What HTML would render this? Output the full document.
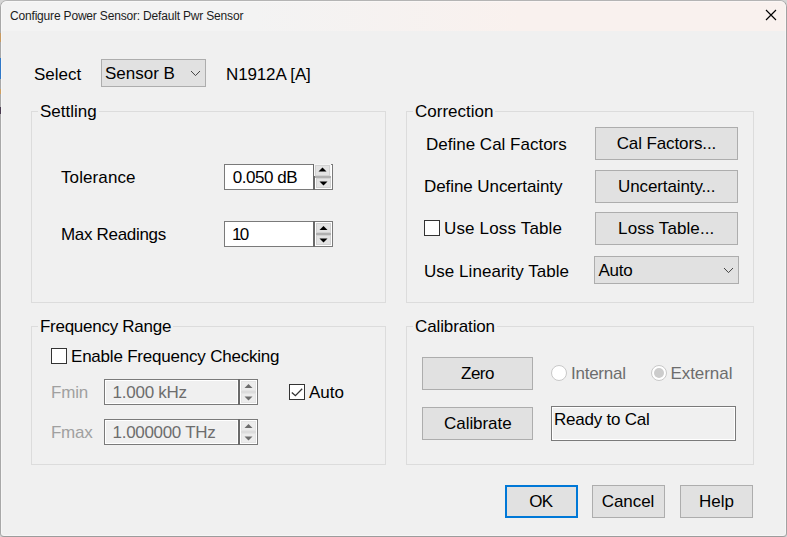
<!DOCTYPE html>
<html><head><meta charset="utf-8">
<style>
html,body{margin:0;padding:0;}
body{width:787px;height:537px;overflow:hidden;background:#d6d6d6;position:relative;font-family:"Liberation Sans",sans-serif;font-size:17px;color:#000;}
.abs{position:absolute;}
#win{position:absolute;left:0;top:0;width:785px;height:535px;border:1px solid #b4b4b4;border-color:#b4b4b4 #a2a2a2 #9c9c9c #a8a8a8;border-radius:7px 7px 4px 4px;background:#f0f0f0;overflow:hidden;}
#hl{position:absolute;left:0;top:0;width:785px;height:535px;box-sizing:border-box;border:1px solid rgba(255,255,255,0.4);border-radius:6px 6px 3px 3px;pointer-events:none;}
#tb{position:absolute;left:0;top:0;width:785px;height:30px;background:linear-gradient(to right,#f3f3f3 0,#f3f3f3 32%,#f9f1ee 66%,#f9f1ee 100%);}
#title{position:absolute;left:9px;top:7px;font-size:12px;line-height:16px;white-space:nowrap;letter-spacing:-0.18px;color:#1c1c1c;}
.t{position:absolute;white-space:nowrap;line-height:20px;height:20px;margin-top:1px;}
.g{color:#a0a0a0;}
.grp{position:absolute;border:1px solid #dcdcdc;box-sizing:border-box;}
.gl{position:absolute;background:#f0f0f0;white-space:nowrap;line-height:20px;height:20px;padding:0 2px;margin-top:1px;}
.btn{position:absolute;box-sizing:border-box;border:1px solid #adadad;background:#e1e1e1;text-align:center;white-space:nowrap;}
.btn span{position:relative;display:inline-block;line-height:20px;}
.combo{position:absolute;box-sizing:border-box;border:1px solid #adadad;background:#e1e1e1;}
.chk{position:absolute;box-sizing:border-box;width:16px;height:16px;border:1px solid #333;background:#fff;}
.spin{position:absolute;box-sizing:border-box;border:1px solid #7a7a7a;background:#fff;}
.rad{position:absolute;box-sizing:border-box;width:16px;height:16px;border:1px solid #c8c8c8;border-radius:50%;background:#fff;}
.rad i{position:absolute;left:2px;top:2px;width:10px;height:10px;border-radius:50%;background:#cccccc;}

.sp{position:absolute;box-sizing:border-box;border:1px solid #7a7a7a;background:#fff;height:26px;}
.sp .sep{position:absolute;top:-1px;bottom:-1px;width:2px;background:#6a6a6a;}
.sp .ub,.sp .db{position:absolute;box-sizing:border-box;width:15px;height:10px;background:#e3e3e3;border:1px solid #d2d2d2;}
.sp .band{position:absolute;height:2px;width:15px;background:#b0b0b0;}
.sp.dis .ub,.sp.dis .db{background:#ececec;border-color:#e4e4e4;}
.sp.dis .band{background:#dcdcdc;}
.sp.dis .ed{position:absolute;left:1px;top:1px;bottom:1px;background:#f0f0f0;}
.sp svg{position:absolute;}
</style></head><body>
<div id="win">
<div id="tb"></div>
<div id="title">Configure Power Sensor: Default Pwr Sensor</div>
<svg class="abs" style="left:763px;top:7px" width="14" height="14" viewBox="0 0 14 14"><path d="M2 2 L12 12 M12 2 L2 12" stroke="#000" stroke-width="1.15" fill="none"/></svg>
<div id="hl"></div>
</div>
<div class="abs" style="left:0;top:33px;width:1px;height:9px;background:#c89a60"></div>
<div class="abs" style="left:0;top:58px;width:1px;height:21px;background:#2f78c8"></div>
<div class="abs" style="left:0;top:89px;width:1px;height:5px;background:#d0a060"></div>
<div class="abs" style="left:0;top:107px;width:1px;height:7px;background:#4a3a50"></div>

<!-- Row: Select -->
<div class="t" id="l_select" style="left:34px;top:64px">Select</div>
<div class="combo" style="left:101px;top:59px;width:105px;height:28px"></div>
<div class="t" id="l_sensorb" style="left:105px;top:63px">Sensor B</div>
<svg class="abs" style="left:190px;top:70px" width="11" height="7" viewBox="0 0 11 7"><path d="M1 1 L5.5 5.6 L10 1" stroke="#3a3a3a" stroke-width="0.95" fill="none"/></svg>
<div class="t" id="l_n1912" style="left:226px;top:64px;letter-spacing:-0.13px">N1912A [A]</div>

<!-- Settling -->
<div class="grp" style="left:31px;top:111px;width:355px;height:192px"></div>
<div class="gl" id="g_settling" style="left:38px;top:101px">Settling</div>
<div class="t" id="l_tol" style="left:61.0px;top:167px;letter-spacing:0.1px">Tolerance</div>
<div class="t" id="l_max" style="left:61.0px;top:224px;letter-spacing:-0.31px">Max Readings</div>
<div class="sp" style="left:224px;top:164px;width:109px"><div class="sep" style="left:88px"></div><div style="position:absolute;left:89px;top:-1px;width:17px;height:12px;background:#f6f6f6"></div><div class="ub" style="left:90px;top:0px;height:11px"></div><div class="band" style="left:90px;top:11px;width:16px"></div><div class="db" style="left:91px;top:13px"></div><svg style="left:93px;top:2px" width="9" height="5" viewBox="0 0 9 5"><path d="M0.5 4.6 L4.5 0.4 L8.5 4.6 Z" fill="#000"/></svg><svg style="left:94px;top:16px" width="9" height="5" viewBox="0 0 9 5"><path d="M0.5 0.4 L4.5 4.6 L8.5 0.4 Z" fill="#000"/></svg></div>
<div class="t" id="l_050" style="left:232.7px;top:167px;letter-spacing:-0.46px">0.050 dB</div>
<div class="sp" style="left:224px;top:221px;width:109px"><div class="sep" style="left:88px"></div><div class="ub" style="left:91px;top:1px"></div><div class="band" style="left:91px;top:11px"></div><div class="db" style="left:91px;top:13px"></div><svg style="left:94px;top:3px" width="9" height="6" viewBox="0 0 9 6"><path d="M0.5 5.1 L4.5 0.9 L8.5 5.1 Z" fill="#000"/></svg><svg style="left:94px;top:16px" width="9" height="5" viewBox="0 0 9 5"><path d="M0.5 0.4 L4.5 4.6 L8.5 0.4 Z" fill="#000"/></svg></div>
<div class="t" id="l_10" style="left:232.0px;top:224px;letter-spacing:-1.76px">10</div>

<!-- Frequency Range -->
<div class="grp" style="left:31px;top:326px;width:355px;height:139px"></div>
<div class="gl" id="g_freq" style="left:38.0px;top:316px;letter-spacing:-0.27px">Frequency Range</div>
<div class="chk" style="left:51px;top:348px"></div>
<div class="t" id="l_enable" style="left:71.0px;top:346px;letter-spacing:-0.21px">Enable Frequency Checking</div>
<div class="t g" id="l_fmin" style="left:51.0px;top:382px;letter-spacing:-0.16px">Fmin</div>
<div class="t g" id="l_fmax" style="left:51.0px;top:422px;letter-spacing:-0.27px">Fmax</div>
<div class="sp dis" style="left:104px;top:379px;width:154px"><div class="ed" style="width:131px"></div><div class="sep" style="left:133px"></div><div class="ub" style="left:136px;top:1px"></div><div class="band" style="left:136px;top:11px"></div><div class="db" style="left:136px;top:13px"></div><svg style="left:139px;top:3px" width="9" height="6" viewBox="0 0 9 6"><path d="M0.5 5.1 L4.5 0.9 L8.5 5.1 Z" fill="#6d6d6d"/></svg><svg style="left:139px;top:16px" width="9" height="5" viewBox="0 0 9 5"><path d="M0.5 0.4 L4.5 4.6 L8.5 0.4 Z" fill="#6d6d6d"/></svg></div>
<div class="t" id="l_khz" style="left:112.6px;top:382px;color:#6d6d6d;letter-spacing:-0.26px">1.000 kHz</div>
<div class="sp dis" style="left:104px;top:419px;width:154px"><div class="ed" style="width:131px"></div><div class="sep" style="left:133px"></div><div class="ub" style="left:136px;top:1px"></div><div class="band" style="left:136px;top:11px"></div><div class="db" style="left:136px;top:13px"></div><svg style="left:139px;top:3px" width="9" height="6" viewBox="0 0 9 6"><path d="M0.5 5.1 L4.5 0.9 L8.5 5.1 Z" fill="#6d6d6d"/></svg><svg style="left:139px;top:16px" width="9" height="5" viewBox="0 0 9 5"><path d="M0.5 0.4 L4.5 4.6 L8.5 0.4 Z" fill="#6d6d6d"/></svg></div>
<div class="t" id="l_thz" style="left:112.6px;top:422px;color:#6d6d6d;letter-spacing:-0.31px">1.000000 THz</div>
<div class="chk" style="left:289px;top:384px"><svg style="position:absolute;left:0;top:0" width="14" height="14" viewBox="0 0 14 14"><path d="M1.8 7.4 L5.4 10.7 L12.2 3.8" stroke="#333" stroke-width="1.3" fill="none"/></svg></div>
<div class="t" id="l_auto2" style="left:309px;top:382px">Auto</div>

<!-- Correction -->
<div class="grp" style="left:406px;top:111px;width:348px;height:192px"></div>
<div class="gl" id="g_corr" style="left:413px;top:101px">Correction</div>
<div class="t" id="l_dcf" style="left:426px;top:134px">Define Cal Factors</div>
<div class="t" id="l_du" style="left:424.0px;top:176px;letter-spacing:-0.08px">Define Uncertainty</div>
<div class="chk" style="left:424px;top:220px"></div>
<div class="t" id="l_ult" style="left:444.0px;top:218px;letter-spacing:0.16px">Use Loss Table</div>
<div class="t" id="l_ulin" style="left:424.0px;top:261px;letter-spacing:0.04px">Use Linearity Table</div>
<div class="btn" style="left:595px;top:127px;width:143px;height:33px"><span id="b_cf" style="top:6px;left:-0.1px;letter-spacing:-0.11px">Cal Factors...</span></div>
<div class="btn" style="left:595px;top:170px;width:143px;height:33px"><span id="b_un" style="top:6px;left:0.2px;letter-spacing:-0.11px">Uncertainty...</span></div>
<div class="btn" style="left:595px;top:212px;width:143px;height:33px"><span id="b_lt" style="top:6px;left:-0.3px;letter-spacing:0.08px">Loss Table...</span></div>
<div class="combo" style="left:594px;top:256px;width:145px;height:28px"></div>
<div class="t" id="l_auto1" style="left:598.4px;top:260px;letter-spacing:-0.21px">Auto</div>
<svg class="abs" style="left:723px;top:267px" width="11" height="7" viewBox="0 0 11 7"><path d="M1 1 L5.5 5.6 L10 1" stroke="#3a3a3a" stroke-width="0.95" fill="none"/></svg>

<!-- Calibration -->
<div class="grp" style="left:406px;top:326px;width:348px;height:139px"></div>
<div class="gl" id="g_cal" style="left:413.1px;top:316px;letter-spacing:-0.13px">Calibration</div>
<div class="btn" style="left:422px;top:357px;width:111px;height:33px"><span id="b_zero" style="top:6px;left:0.0px;letter-spacing:-0.53px">Zero</span></div>
<div class="btn" style="left:422px;top:407px;width:111px;height:33px"><span id="b_calib" style="top:6px;left:0.3px;letter-spacing:-0.06px">Calibrate</span></div>
<div class="rad" style="left:551px;top:365px"></div>
<div class="t g" id="l_int" style="left:571.0px;top:363px;color:#6d6d6d;letter-spacing:-0.25px">Internal</div>
<div class="rad" style="left:651px;top:365px"><i></i></div>
<div class="t g" id="l_ext" style="left:670.4px;top:363px;color:#6d6d6d;letter-spacing:-0.05px">External</div>
<div class="spin" style="left:551px;top:406px;width:185px;height:35px;background:#f0f0f0;box-shadow:inset 0 0 0 1px #fff"></div>
<div class="t" id="l_ready" style="left:554.0px;top:409px;letter-spacing:-0.22px">Ready to Cal</div>

<!-- Bottom buttons -->
<div class="btn" style="left:505px;top:485px;width:73px;height:33px;border:2px solid #0078d7"><span id="b_ok" style="top:5px;left:-0.6px;letter-spacing:-0.64px">OK</span></div>
<div class="btn" style="left:592px;top:485px;width:73px;height:33px"><span id="b_cancel" style="top:6px;left:-0.5px;letter-spacing:-0.06px">Cancel</span></div>
<div class="btn" style="left:680px;top:485px;width:73px;height:33px"><span id="b_help" style="top:6px">Help</span></div>
</body></html>
